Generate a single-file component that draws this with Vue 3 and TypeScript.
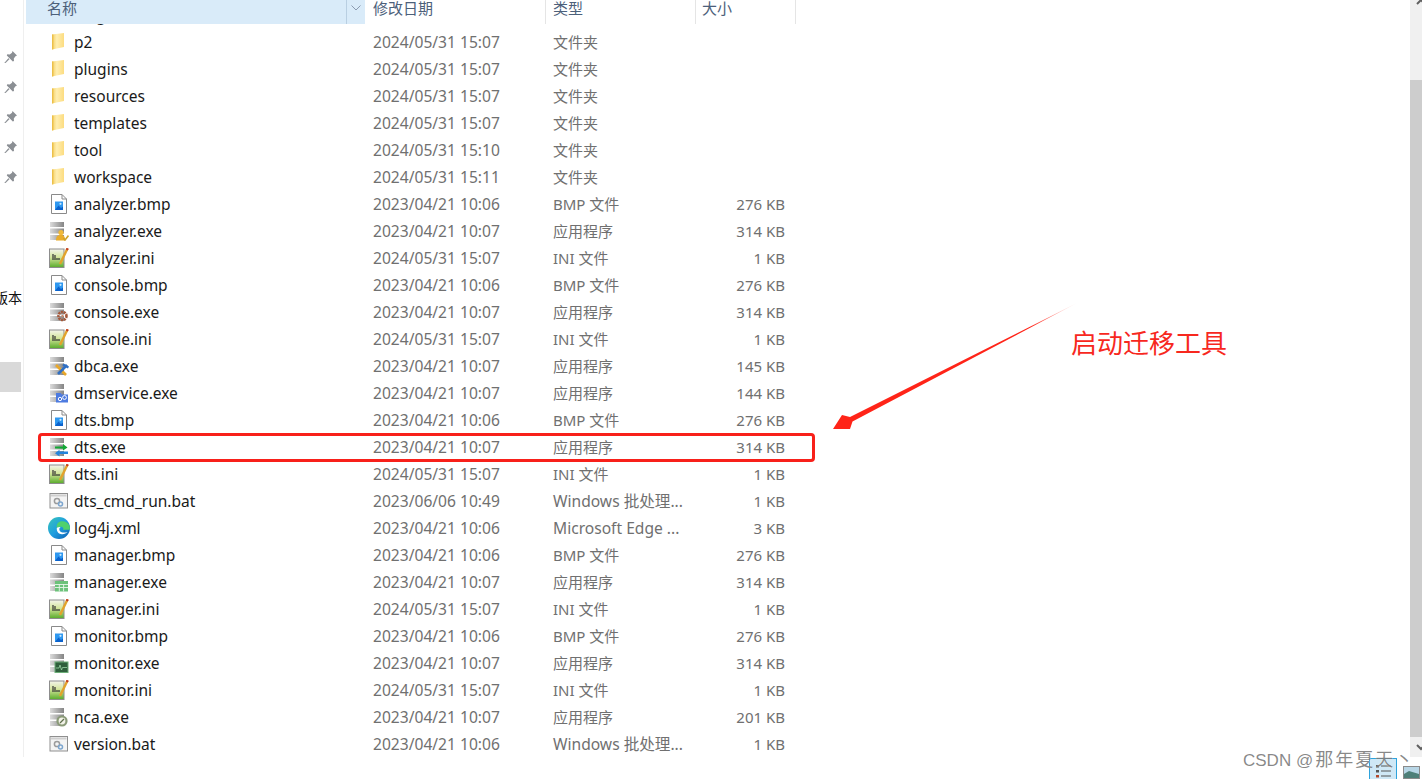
<script setup lang="ts">
type Kind = 'folder' | 'bmp' | 'exe' | 'ini' | 'bat' | 'edge'

interface FileRow {
  name: string
  date: string
  type: string
  size: string
  kind: Kind
  badge?: string
}

const rows: FileRow[] = [
  // scrolled almost out of view, only a descender shows below the header
  { name: 'lang', date: '', type: '', size: '', kind: 'folder' },
  { name: 'p2', date: '2024/05/31 15:07', type: '文件夹', size: '', kind: 'folder' },
  { name: 'plugins', date: '2024/05/31 15:07', type: '文件夹', size: '', kind: 'folder' },
  { name: 'resources', date: '2024/05/31 15:07', type: '文件夹', size: '', kind: 'folder' },
  { name: 'templates', date: '2024/05/31 15:07', type: '文件夹', size: '', kind: 'folder' },
  { name: 'tool', date: '2024/05/31 15:10', type: '文件夹', size: '', kind: 'folder' },
  { name: 'workspace', date: '2024/05/31 15:11', type: '文件夹', size: '', kind: 'folder' },
  { name: 'analyzer.bmp', date: '2023/04/21 10:06', type: 'BMP 文件', size: '276 KB', kind: 'bmp' },
  { name: 'analyzer.exe', date: '2023/04/21 10:07', type: '应用程序', size: '314 KB', kind: 'exe', badge: 'analyzer' },
  { name: 'analyzer.ini', date: '2024/05/31 15:07', type: 'INI 文件', size: '1 KB', kind: 'ini' },
  { name: 'console.bmp', date: '2023/04/21 10:06', type: 'BMP 文件', size: '276 KB', kind: 'bmp' },
  { name: 'console.exe', date: '2023/04/21 10:07', type: '应用程序', size: '314 KB', kind: 'exe', badge: 'console' },
  { name: 'console.ini', date: '2024/05/31 15:07', type: 'INI 文件', size: '1 KB', kind: 'ini' },
  { name: 'dbca.exe', date: '2023/04/21 10:07', type: '应用程序', size: '145 KB', kind: 'exe', badge: 'dbca' },
  { name: 'dmservice.exe', date: '2023/04/21 10:07', type: '应用程序', size: '144 KB', kind: 'exe', badge: 'service' },
  { name: 'dts.bmp', date: '2023/04/21 10:06', type: 'BMP 文件', size: '276 KB', kind: 'bmp' },
  { name: 'dts.exe', date: '2023/04/21 10:07', type: '应用程序', size: '314 KB', kind: 'exe', badge: 'dts' },
  { name: 'dts.ini', date: '2024/05/31 15:07', type: 'INI 文件', size: '1 KB', kind: 'ini' },
  { name: 'dts_cmd_run.bat', date: '2023/06/06 10:49', type: 'Windows 批处理...', size: '1 KB', kind: 'bat' },
  { name: 'log4j.xml', date: '2023/04/21 10:06', type: 'Microsoft Edge ...', size: '3 KB', kind: 'edge' },
  { name: 'manager.bmp', date: '2023/04/21 10:06', type: 'BMP 文件', size: '276 KB', kind: 'bmp' },
  { name: 'manager.exe', date: '2023/04/21 10:07', type: '应用程序', size: '314 KB', kind: 'exe', badge: 'manager' },
  { name: 'manager.ini', date: '2024/05/31 15:07', type: 'INI 文件', size: '1 KB', kind: 'ini' },
  { name: 'monitor.bmp', date: '2023/04/21 10:06', type: 'BMP 文件', size: '276 KB', kind: 'bmp' },
  { name: 'monitor.exe', date: '2023/04/21 10:07', type: '应用程序', size: '314 KB', kind: 'exe', badge: 'monitor' },
  { name: 'monitor.ini', date: '2024/05/31 15:07', type: 'INI 文件', size: '1 KB', kind: 'ini' },
  { name: 'nca.exe', date: '2023/04/21 10:07', type: '应用程序', size: '201 KB', kind: 'exe', badge: 'nca' },
  { name: 'version.bat', date: '2023/04/21 10:06', type: 'Windows 批处理...', size: '1 KB', kind: 'bat' },
]

const pins = [0, 1, 2, 3, 4]

function isLongType(type: string) {
  return type.endsWith('...')
}
</script>

<template>
  <div class="page">
    <!-- shared icon parts -->
    <svg class="defs" width="0" height="0" aria-hidden="true">
      <defs>
        <linearGradient id="folder-fill" x1="0" y1="0" x2="1" y2="0">
          <stop offset="0" stop-color="#f5cf63" />
          <stop offset="0.4" stop-color="#ffeeb0" />
          <stop offset="1" stop-color="#fcdc80" />
        </linearGradient>
        <linearGradient id="bar-fill" x1="0" y1="0" x2="1" y2="0">
          <stop offset="0" stop-color="#dcdcdc" />
          <stop offset="1" stop-color="#858585" />
        </linearGradient>
        <linearGradient id="ini-fill" x1="0" y1="0" x2="0" y2="1">
          <stop offset="0" stop-color="#f4f4ec" />
          <stop offset="0.45" stop-color="#d3e59a" />
          <stop offset="1" stop-color="#58ab2a" />
        </linearGradient>
        <linearGradient id="arrow-fill" gradientUnits="userSpaceOnUse" x1="1077" y1="303" x2="1030" y2="327">
          <stop offset="0" stop-color="#ff2a1f" stop-opacity="0.1" />
          <stop offset="1" stop-color="#ff2418" />
        </linearGradient>
        <symbol id="ico-folder" viewBox="0 0 20 20">
          <path d="M3 2.5 L15 1 V15 L3 17.5 Z" fill="url(#folder-fill)" />
          <path d="M3 2.5 H4.4 V17.2 L3 17.5 Z" fill="#ecc04a" />
        </symbol>
        <symbol id="ico-bmp" viewBox="0 0 20 20">
          <path d="M2.5 0.5 H13 L17.5 5 V19.5 H2.5 Z" fill="#fff" stroke="#8a8a8a" />
          <path d="M13 0.5 V5 H17.5" fill="none" stroke="#8a8a8a" />
          <rect x="6" y="7.5" width="8" height="8.5" fill="#2f98f0" />
          <path d="M6 16 L9.5 11.5 L12 14 L14 12.5 V16 Z" fill="#0c62cc" />
          <circle cx="11.5" cy="9.8" r="1.1" fill="#c8e8ff" />
        </symbol>
        <symbol id="ico-exe" viewBox="0 0 20 20">
          <rect x="1" y="1" width="14" height="5" fill="url(#bar-fill)" />
          <rect x="1" y="7.5" width="14" height="5" fill="url(#bar-fill)" />
          <rect x="1" y="14" width="14" height="5" fill="url(#bar-fill)" />
        </symbol>
        <symbol id="ico-ini" viewBox="0 0 20 20">
          <rect x="0.5" y="1" width="14.5" height="18.5" fill="url(#ini-fill)" stroke="#8d8d8d" />
          <path d="M4 6 V12 M6 7 V12 M8 10 V12 M10 10 V12" stroke="#333" stroke-width="1.2" />
          <path d="M18.5 0.5 L11 16" stroke="#e2a32c" stroke-width="2.4" />
          <path d="M18.7 0.3 L17.8 2" stroke="#c23b22" stroke-width="2.4" />
        </symbol>
        <symbol id="ico-bat" viewBox="0 0 20 20">
          <rect x="1" y="2.5" width="17.5" height="14.5" fill="#f4f4f4" stroke="#8f8f8f" />
          <rect x="2" y="3.5" width="15.5" height="2" fill="#cfcfcf" />
          <circle cx="8" cy="10" r="2.6" fill="none" stroke="#9b9b9b" stroke-width="1.5" />
          <circle cx="11.5" cy="13" r="2" fill="none" stroke="#7da6cf" stroke-width="1.5" />
        </symbol>
      </defs>
    </svg>

    <aside class="sidebar">
      <div v-for="p in pins" :key="p" class="pin">
        <svg width="14" height="14" viewBox="0 0 14 14">
          <path d="M8.5 1 L13 5.5 L11.5 6.2 L9.8 8.6 L10 11 L8.8 11.5 L2.8 5.5 L3.3 4.3 L5.7 4.5 L8 2.7 Z" fill="#8b8f94" />
          <path d="M5 9.2 L1.2 13 L1 12.7 L4.5 8.6 Z" fill="#8b8f94" stroke="#8b8f94" stroke-width="0.8" />
        </svg>
      </div>
      <div class="side-label">版本</div>
      <div class="side-selected"></div>
    </aside>

    <main class="main">
      <header class="head">
        <div class="head-name">
          <span class="head-title">名称</span>
          <span class="head-sort">
            <svg width="10" height="6" viewBox="0 0 10 6">
              <path d="M0.5 0.5 L5 5 L9.5 0.5" fill="none" stroke="#8b9bb0" />
            </svg>
          </span>
        </div>
        <div class="head-cell head-date">修改日期</div>
        <div class="head-cell head-type">类型</div>
        <div class="head-cell head-size">大小</div>
      </header>

      <div class="list">
        <div v-for="row in rows" :key="row.name" class="row">
          <div class="cell-name">
            <span class="icon" :class="{ 'icon-edge': row.kind === 'edge' }">
              <svg width="20" height="20" viewBox="0 0 20 20">
                <defs v-if="row.kind === 'edge'">
                  <linearGradient id="edge-fill" x1="0" y1="0" x2="1" y2="1">
                    <stop offset="0" stop-color="#37c5b8" />
                    <stop offset="0.5" stop-color="#1f9ee0" />
                    <stop offset="1" stop-color="#0c5cb0" />
                  </linearGradient>
                </defs>
                <template v-if="row.kind === 'edge'">
                  <circle cx="10" cy="10" r="10" fill="url(#edge-fill)" />
                  <path d="M19.6 8 C18.5 4.5 14 3 11 4.2 C8.5 5.2 7.4 7.6 8 10 C10 8.6 13 8.4 13.8 10 C14.2 11 13.6 11.4 13.4 11.6 H19.8 C20 10.8 19.9 9 19.6 8 Z" fill="#4fd16d" />
                  <path d="M8 10 C7.6 13.5 10 15.8 13 15.6 C15 15.5 16.5 14.8 17.8 13.6 C15.5 14.6 10.5 14.4 10.3 11.6 C10.2 10.6 10.7 9.6 11.5 9.2 C10 9.2 8.8 9.4 8 10 Z" fill="#fff" />
                </template>
                <use v-else :href="'#ico-' + row.kind" width="20" height="20" />

                <g v-if="row.badge === 'analyzer'">
                  <circle cx="12" cy="11.5" r="2.6" fill="#f0b93a" />
                  <path d="M7 19.5 C7 15 9 14 12 14 C15 14 16 15.5 16 19.5 Z" fill="#e9ac2b" />
                  <path d="M14.5 17 L16 19 L19.5 14.5" fill="none" stroke="#cfa32c" stroke-width="1.6" />
                </g>
                <g v-if="row.badge === 'console'">
                  <circle cx="13.5" cy="14" r="4" fill="none" stroke="#a4583a" stroke-width="2.6" stroke-dasharray="2 0.8" />
                  <circle cx="13.5" cy="14" r="1.2" fill="#c98a6c" />
                </g>
                <g v-if="row.badge === 'dbca'">
                  <path d="M7 9 L17 19" stroke="#e8a72a" stroke-width="2.6" />
                  <path d="M18 9 L9 18" stroke="#2f6fc4" stroke-width="2.6" />
                  <path d="M14 8.5 L19.5 11.5" stroke="#2f6fc4" stroke-width="2.4" />
                </g>
                <g v-if="row.badge === 'service'">
                  <path d="M7 10 H11.5 L13 11.5 H19 V19.5 H7 Z" fill="#4d7be0" />
                  <circle cx="11" cy="16" r="1.7" fill="none" stroke="#fff" />
                  <circle cx="15.5" cy="14.5" r="1.9" fill="none" stroke="#fff" />
                </g>
                <g v-if="row.badge === 'dts'">
                  <path d="M6 9.5 H14 V7 L18.5 10.5 L14 13.5 V11.5 H6 Z" fill="#12a835" />
                  <path d="M19 14.5 H10.5 V12.8 L6 16.2 L10.5 19.5 V17 H19 Z" fill="#2484dc" />
                </g>
                <g v-if="row.badge === 'manager'">
                  <rect x="6" y="9" width="13" height="10.5" fill="#6cc27a" />
                  <path d="M6 12.5 H19 M6 15.5 H19 M10.3 12 V19.5 M14.6 12 V19.5" stroke="#e8f6ea" stroke-width="0.9" />
                </g>
                <g v-if="row.badge === 'monitor'">
                  <rect x="6" y="9" width="13" height="10.5" fill="#2f5f3c" stroke="#6cae78" />
                  <path d="M7 15 H10 L11 12 L12.5 17 L13.5 14.5 H18" fill="none" stroke="#9ad4a6" stroke-width="0.8" />
                </g>
                <g v-if="row.badge === 'nca'">
                  <circle cx="13" cy="14" r="5.6" fill="#8a9a78" />
                  <circle cx="13" cy="14" r="3.4" fill="#f2f2e8" />
                  <path d="M11 16 L15 12" stroke="#5e6e4c" stroke-width="1.3" />
                </g>
              </svg>
            </span>
            <span class="name">{{ row.name }}</span>
          </div>
          <div class="cell-meta cell-date">{{ row.date }}</div>
          <div class="cell-meta" :class="{ 'cell-long': isLongType(row.type) }">{{ row.type }}</div>
          <div class="cell-meta cell-size">{{ row.size }}</div>
        </div>
      </div>
    </main>

    <div class="scrollbar">
      <div class="scroll-track">
        <svg class="scroll-up" width="12" height="8" viewBox="0 0 12 8">
          <path d="M2 5 L6 1 L10 5" fill="none" stroke="#606060" stroke-width="2" />
        </svg>
      </div>
      <div class="scroll-thumb"></div>
      <div class="scroll-down">
        <svg width="12" height="8" viewBox="0 0 12 8">
          <path d="M2 2 L6 6 L10 2" fill="none" stroke="#606060" stroke-width="2" />
        </svg>
      </div>
    </div>

    <!-- annotations drawn over the screenshot -->
    <div class="mark"></div>
    <svg class="arrow" width="1422" height="779" viewBox="0 0 1422 779">
      <polygon points="1077,303 850,417 842,415 833,429 850,429 852.5,421.5" fill="url(#arrow-fill)" />
    </svg>
    <div class="note">启动迁移工具</div>

    <div class="view-details">
      <svg width="28" height="21" viewBox="0 0 28 21">
        <rect x="7" y="7" width="3" height="2.5" fill="#555" />
        <rect x="7" y="12" width="3" height="2.5" fill="#555" />
        <rect x="7" y="17" width="3" height="2.5" fill="#b5482a" />
        <path d="M12 8 H22 M12 13 H22 M12 18 H22" stroke="#555" />
      </svg>
    </div>
    <div class="view-icons">
      <svg width="17" height="13" viewBox="0 0 17 13">
        <rect x="0.5" y="0.5" width="16" height="12" fill="#b8d6e6" stroke="#8a8a8a" />
        <path d="M1 8 L6 5 L16 8 V12 H1 Z" fill="#4e7f78" />
      </svg>
    </div>
    <div class="watermark">CSDN @<span class="watermark-name">那年夏天丶</span></div>
  </div>
</template>

<style>
html,
body {
  margin: 0;
  background: #fff;
}
</style>

<style scoped>
.page {
  position: relative;
  display: flex;
  align-items: flex-start;
  width: 1422px;
  height: 779px;
  overflow: hidden;
  background: #fff;
  font-family: "Noto Sans", "Noto Sans CJK SC", sans-serif;
  font-size: 15px;
}

.defs {
  position: absolute;
}

.sidebar {
  flex: none;
  box-sizing: border-box;
  width: 24px;
  height: 757px;
  padding-top: 42px;
  border-right: 1px solid #efefef;
  overflow: hidden;
}

.pin {
  display: flex;
  align-items: center;
  justify-content: center;
  width: 21px;
  height: 30px;
}

.side-label {
  display: flex;
  justify-content: flex-end;
  align-items: center;
  width: 22px;
  height: 30px;
  margin-top: 90px;
  color: #111;
  font-size: 14px;
  white-space: nowrap;
}

.side-selected {
  width: 21px;
  height: 30px;
  margin-top: 50px;
  background: #d9d9d9;
}

.main {
  flex: 1;
  min-width: 0;
  padding-left: 2px;
}

.head {
  position: relative;
  z-index: 1;
  display: grid;
  grid-template-columns: 339px 181px 150px 100px;
  height: 24px;
  background: #fff;
  color: #4c607a;
  font-size: 15px;
  line-height: 17px;
}

.head-name {
  display: flex;
  justify-content: space-between;
  background: #d9ebf9;
}

.head-title {
  padding-left: 21px;
}

.head-sort {
  display: flex;
  justify-content: center;
  width: 18px;
  padding-top: 5px;
  border-left: 1px solid #b9cfe2;
}

.head-cell {
  box-sizing: border-box;
  border-right: 1px solid #e5e5e5;
}

.head-date {
  padding-left: 8px;
}

.head-type {
  padding-left: 7px;
}

.head-size {
  padding-left: 6px;
}

.list {
  margin-top: -23px;
}

.row {
  display: grid;
  grid-template-columns: 347px 180px 149px 83px;
  align-items: center;
  height: 27px;
}

.cell-name {
  display: flex;
  align-items: center;
  padding-left: 23px;
}

.icon {
  display: flex;
  flex: none;
  width: 20px;
  height: 20px;
  margin-right: 5px;
}

.icon-edge svg {
  overflow: visible;
  transform: scale(1.1);
}

.name {
  color: #1a1a1a;
  font-size: 15.5px;
  white-space: nowrap;
}

.cell-meta {
  color: #707070;
  white-space: nowrap;
}

.cell-date {
  font-size: 15.6px;
}

.cell-long {
  font-size: 15.6px;
}

.cell-size {
  text-align: right;
}

.scrollbar {
  display: flex;
  flex: none;
  flex-direction: column;
  width: 12px;
  height: 757px;
  overflow: hidden;
}

.scroll-track {
  height: 80px;
  background: #f0f0f0;
}

.scroll-up {
  display: block;
  margin-top: -1px;
  margin-left: 5px;
}

.scroll-thumb {
  flex: 1;
  background: #cdcdcd;
}

.scroll-down {
  display: flex;
  align-items: center;
  height: 20px;
  padding-left: 5px;
  background: #f0f0f0;
}

.scroll-down svg {
  flex: none;
}

.mark {
  position: absolute;
  left: 38px;
  top: 433px;
  box-sizing: border-box;
  width: 777px;
  height: 29px;
  border: 3px solid #f8201a;
  border-radius: 4px;
}

.arrow {
  position: absolute;
  left: 0;
  top: 0;
  pointer-events: none;
}

.note {
  position: absolute;
  left: 1071px;
  top: 324px;
  color: #f7281e;
  font-size: 26px;
  line-height: 38px;
  white-space: nowrap;
}

.view-details {
  position: absolute;
  left: 1369px;
  top: 758px;
  box-sizing: border-box;
  width: 28px;
  height: 21px;
  border: 1px solid #2ea3dc;
  border-bottom: 0;
  background: #cfe8f6;
}

.view-details svg {
  display: block;
  margin: -1px;
}

.view-icons {
  position: absolute;
  left: 1403px;
  top: 766px;
  line-height: 0;
}

.watermark {
  position: absolute;
  left: 1243px;
  top: 748px;
  color: rgba(90, 90, 90, 0.72);
  font-family: "Liberation Sans", "Noto Sans CJK SC", sans-serif;
  font-size: 17px;
  line-height: 24px;
  white-space: nowrap;
  text-shadow: 0 0 1px rgba(255, 255, 255, 0.8);
}

.watermark-name {
  margin-left: 2px;
  font-size: 18px;
  letter-spacing: 2px;
}
</style>
